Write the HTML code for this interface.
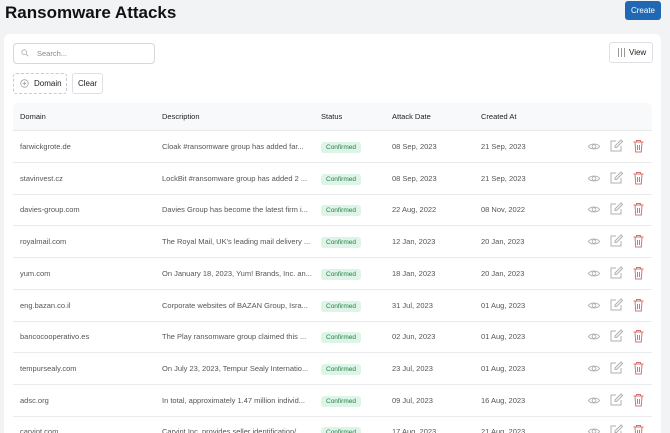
<!DOCTYPE html><html style="width:670px;height:433px;overflow:hidden"><head><style>
body{margin:0;width:670px;height:433px;overflow:hidden;background:#f1f3f5;font-family:"Liberation Sans",sans-serif;position:relative;color:#222}
h1{position:absolute;left:5px;top:1px;margin:0;font-size:17px;font-weight:bold;line-height:24px;color:#111}
.create{position:absolute;left:625px;top:1px;width:36px;height:19px;background:#2068b4;color:#fff;font-size:8px;line-height:19px;text-align:center;border-radius:3px}
.card{position:absolute;left:4px;top:34px;width:657px;height:399px;background:#fff;border-radius:6px 6px 0 0}
.search{position:absolute;left:13px;top:43px;width:140px;height:19px;border:1px solid #d5d8dc;border-radius:4px;font-size:7.5px;color:#888;line-height:19px}
.view{position:absolute;left:609px;top:42px;width:42px;height:19px;border:1px solid #dde0e4;border-radius:3px;font-size:8px;line-height:19px}
.dom{position:absolute;left:13px;top:73px;width:52px;height:19px;border:1px dashed #c8ccd0;border-radius:3px;font-size:8px;line-height:19px}
.clear{position:absolute;left:72px;top:73px;width:29px;height:19px;border:1px solid #dde0e4;border-radius:3px;font-size:8px;line-height:19px;text-align:center}
.head{position:absolute;left:13px;top:103px;width:639px;height:27px;background:#f8f9fa;border-bottom:1px solid #e6e8ea;border-radius:5px 5px 0 0;font-size:7.5px}
.row{position:absolute;left:13px;width:639px;height:31px;border-bottom:1px solid #e9ebed;font-size:7.5px;color:#555}
.c{position:absolute;top:0;line-height:31px;white-space:nowrap}
.head .c{line-height:27px;color:#222}
.badge{display:inline-block;background:#dcf5e6;color:#2a7a4a;font-size:6.5px;line-height:11px;padding:0 5px;border-radius:3px}
svg{position:absolute;top:9px}
</style></head><body>
<h1>Ransomware Attacks</h1>
<div class="create">Create</div>
<div class="card"></div>
<div class="search"><svg style="left:7px;top:5px" width="8" height="8" viewBox="0 0 10 10"><circle cx="4" cy="4" r="3" fill="none" stroke="#aaa"/><path d="M6.3 6.3L9 9" stroke="#aaa"/></svg><span style="position:absolute;left:23px">Search...</span></div>
<div class="view"><svg style="left:7px;top:5px" width="9" height="9" viewBox="0 0 9 9" stroke="#999"><path d="M1.5 0v9M4.5 0v9M7.5 0v9"/></svg><span style="position:absolute;left:19px">View</span></div>
<div class="dom"><svg style="left:6px;top:5px" width="9" height="9" viewBox="0 0 10 10"><circle cx="5" cy="5" r="4.2" fill="none" stroke="#aaa"/><path d="M5 3v4M3 5h4" stroke="#aaa"/></svg><span style="position:absolute;left:20px">Domain</span></div>
<div class="clear">Clear</div>
<div class="head"><span class="c" style="left:7px">Domain</span><span class="c" style="left:149px">Description</span><span class="c" style="left:308px">Status</span><span class="c" style="left:379px">Attack Date</span><span class="c" style="left:468px">Created At</span></div>
<div id="rows"></div>
<script>
var d=[["farwickgrote.de","Cloak #ransomware group has added far...","08 Sep, 2023","21 Sep, 2023"],["stavinvest.cz","LockBit #ransomware group has added 2 ...","08 Sep, 2023","21 Sep, 2023"],["davies-group.com","Davies Group has become the latest firm  i...","22 Aug, 2022","08 Nov, 2022"],["royalmail.com","The Royal Mail, UK's leading mail delivery ...","12 Jan, 2023","20 Jan, 2023"],["yum.com","On January 18, 2023, Yum! Brands, Inc. an...","18 Jan, 2023","20 Jan, 2023"],["eng.bazan.co.il","Corporate websites of BAZAN Group, Isra...","31 Jul, 2023","01 Aug, 2023"],["bancocooperativo.es","The Play ransomware group claimed this ...","02 Jun, 2023","01 Aug, 2023"],["tempursealy.com","On July 23, 2023, Tempur Sealy Internatio...","23 Jul, 2023","01 Aug, 2023"],["adsc.org","In total, approximately 1.47 million individ...","09 Jul, 2023","16 Aug, 2023"],["carvint.com","Carvint Inc. provides seller identification/...","17 Aug, 2023","21 Aug, 2023"]];
var h="";d.forEach(function(r,i){var t=131+i*31.7;h+='<div class="row" style="top:'+t+'px"><span class="c" style="left:7px">'+r[0]+'</span><span class="c" style="left:149px">'+r[1]+'</span><span class="c" style="left:308px"><span class="badge">Confirmed</span></span><span class="c" style="left:379px">'+r[2]+'</span><span class="c" style="left:468px">'+r[3]+'</span>'+
'<svg style="left:574px;top:9px" width="14" height="13" viewBox="0 0 14 14" fill="none" stroke="#b0b0b0"><path d="M1 7C3 3.5 11 3.5 13 7C11 10.5 3 10.5 1 7Z"/><circle cx="7" cy="7" r="2"/></svg>'+
'<svg style="left:596px;top:8px" width="14" height="14" viewBox="0 0 14 14" fill="none" stroke="#b0b0b0"><path d="M7 2H2v10h10V7"/><path d="M12 1L6 7v1.5h1.5L13.5 2.5Z"/></svg>'+
'<svg style="left:619px;top:8px" width="13" height="14" viewBox="0 0 12 14" fill="none" stroke="#d97070"><path d="M1 3h10M4 3V1.5h4V3M2.5 3l.7 10h5.6l.7-10M5 6v5M7 6v5"/></svg></div>'});
document.getElementById("rows").innerHTML=h;
</script>
</body></html>
